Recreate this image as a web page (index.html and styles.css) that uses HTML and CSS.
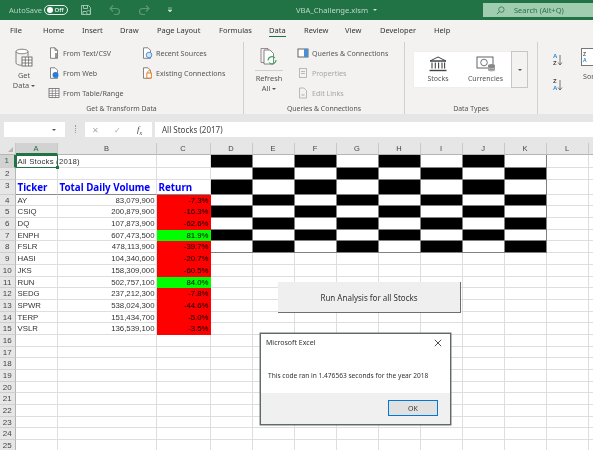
FILE: index.html
```html
<!DOCTYPE html>
<html lang="en">
<head>
<meta charset="utf-8">
<title>VBA_Challenge.xlsm - Excel</title>
<link rel="stylesheet" href="styles.css">
</head>
<body>
<div class="app">
<header class="titlebar">
  <span class="autosave">AutoSave</span>
  <span class="toggle"><i class="knob"></i><b>Off</b></span>
  <svg class="qa save" viewBox="0 0 12 12"><path d="M1.5 1.5h7l2 2v7h-9z M3.5 1.5v3h4v-3 M3 10.5v-3h3" fill="none" stroke="#a9cdb8" stroke-width=".9"/><circle cx="8.5" cy="8.5" r="2" fill="none" stroke="#a9cdb8" stroke-width=".8"/></svg>
  <svg class="qa undo" viewBox="0 0 12 12"><path d="M1.5 4.5h6a3 3 0 0 1 0 6H5 M4 1.5l-3 3 3 3" fill="none" stroke="#5c9a78" stroke-width="1.1"/></svg>
  <svg class="qa redo" viewBox="0 0 12 12"><path d="M10.5 4.5h-6a3 3 0 0 0 0 6H7 M8 1.5l3 3-3 3" fill="none" stroke="#5c9a78" stroke-width="1.1"/></svg>
  <svg class="qa more" viewBox="0 0 6 6"><path d="M1 1h4 M1 3h4l-2 2z" fill="#cfe3d7" stroke="#cfe3d7" stroke-width=".6"/></svg>
  <span class="filename">VBA_Challenge.xlsm</span><span class="caret-w"></span>
  <div class="search">
    <svg class="search-icon" viewBox="0 0 10 10"><circle cx="6" cy="4" r="3" fill="none" stroke="#2f7a50" stroke-width=".9"/><path d="M3.8 6.2L1 9" stroke="#2f7a50" stroke-width="1"/></svg>
    <span>Search (Alt+Q)</span>
  </div>
</header>
<nav class="tabs">
  <span class="tab t-file">File</span><span class="tab t-home">Home</span><span class="tab t-insert">Insert</span><span class="tab t-draw">Draw</span><span class="tab t-layout">Page Layout</span><span class="tab t-form">Formulas</span><span class="tab t-data"><span class="active">Data</span></span><span class="tab t-rev">Review</span><span class="tab t-view">View</span><span class="tab t-dev">Developer</span><span class="tab">Help</span>
</nav>
<section class="ribbon">
  <div class="group g-get">
    <div class="group-body">
      <div class="big get-data">
        <svg class="ic-big" viewBox="0 0 20 20"><ellipse cx="8" cy="3.5" rx="6" ry="2.3" fill="#fff" stroke="#666" stroke-width=".8"/><path d="M2 3.5v11.5c0 1.3 2.7 2.2 5.5 2.3M14 3.5v5" fill="none" stroke="#666" stroke-width=".8"/><rect x="8" y="9" width="10" height="9" fill="#fff" stroke="#555" stroke-width=".8"/><path d="M8 12h10M8 15h10M11.3 9v9M14.6 9v9" stroke="#555" stroke-width=".7"/></svg>
        <span>Get</span><span>Data <i class="caret"></i></span>
      </div>
      <div class="col c1">
        <div class="item"><svg class="ic" viewBox="0 0 12 12"><path d="M2.5.8h4.5l2.5 2.5v8H2.5z M7 .8v2.5h2.5" fill="#fff" stroke="#666" stroke-width=".8"/><path d="M8 6v5" stroke="#555" stroke-width="1.2"/></svg>From Text/CSV</div>
        <div class="item"><svg class="ic" viewBox="0 0 12 12"><path d="M2.5.8h4.5l2.5 2.5v8H2.5z" fill="#fff" stroke="#666" stroke-width=".8"/><circle cx="7.5" cy="8" r="3" fill="#2b7cd3"/></svg>From Web</div>
        <div class="item"><svg class="ic" viewBox="0 0 12 12"><rect x="1" y="1.5" width="10" height="9" fill="#fff" stroke="#666" stroke-width=".8"/><path d="M1 4h10M1 6.5h10M1 8.5h10M4.3 1.5v9M7.6 1.5v9" stroke="#666" stroke-width=".6"/></svg>From Table/Range</div>
      </div>
      <div class="col c2">
        <div class="item"><svg class="ic" viewBox="0 0 12 12"><path d="M2.5.8h4.5l2.5 2.5v8H2.5z" fill="#fff" stroke="#666" stroke-width=".8"/><circle cx="8" cy="8" r="2.8" fill="#d5e6f5" stroke="#2b7cd3" stroke-width=".8"/></svg>Recent Sources</div>
        <div class="item"><svg class="ic" viewBox="0 0 12 12"><path d="M2.5.8h4.5l2.5 2.5v8H2.5z" fill="#fff" stroke="#666" stroke-width=".8"/><rect x="5.8" y="6" width="4.6" height="5" fill="#fff" stroke="#e8822a"/><path d="M6.8 6V4.8a1.2 1.2 0 0 1 2.6 0V6" fill="none" stroke="#e8822a" stroke-width=".8"/></svg>Existing Connections</div>
      </div>
    </div>
    <div class="group-label">Get &amp; Transform Data</div>
  </div>
  <div class="group g-query">
    <div class="group-body">
      <div class="big refresh">
        <svg class="ic-big" viewBox="0 0 20 20"><path d="M2 1.5h7v14H2z" fill="#f3f2f1" stroke="#777" stroke-width=".8"/><path d="M5 3h6l3.5 3.5V17H5z" fill="#fff" stroke="#666" stroke-width=".8"/><path d="M9 13.5a4 4 0 0 1 7-2.5M17 13a4 4 0 0 1-7 2.5" fill="none" stroke="#3aa65f" stroke-width="1.1"/></svg>
        <div class="refresh-line"></div>
        <span>Refresh</span><span>All <i class="caret"></i></span>
      </div>
      <div class="col c3">
        <div class="item"><svg class="ic" viewBox="0 0 12 12"><rect x="1" y="2" width="10" height="8" fill="#fff" stroke="#555" stroke-width=".9"/><rect x="7" y="2" width="4" height="8" fill="#4a90d6"/></svg>Queries &amp; Connections</div>
        <div class="item off"><svg class="ic" viewBox="0 0 12 12"><rect x="2.5" y="1.5" width="7" height="9" fill="none" stroke="#aaa" stroke-width=".8"/><path d="M4 4.5h4M4 6.5h4" stroke="#aaa" stroke-width=".8"/></svg>Properties</div>
        <div class="item off"><svg class="ic" viewBox="0 0 12 12"><path d="M2.5 1h4.5l2.5 2.5v7.5h-7z" fill="none" stroke="#aaa" stroke-width=".8"/><path d="M4.5 8h3" stroke="#aaa"/></svg>Edit Links</div>
      </div>
    </div>
    <div class="group-label">Queries &amp; Connections</div>
  </div>
  <div class="group g-types">
    <div class="group-body">
      <div class="gallery">
        <div class="gal-item stocks">
          <svg class="ic-gal" viewBox="0 0 20 16"><path d="M2 5L10 1l8 4z M2 5h16" fill="none" stroke="#444" stroke-width="1"/><path d="M4 6.5v6M7.3 6.5v6M10.6 6.5v6M14 6.5v6M16.6 6.5v6" stroke="#444" stroke-width="1.1"/><path d="M1.5 14.5h17" stroke="#444" stroke-width="1.4"/></svg>
          <span>Stocks</span>
        </div>
        <div class="gal-item cur">
          <svg class="ic-gal" viewBox="0 0 20 16"><rect x="1" y="1" width="16" height="11" fill="#fff" stroke="#555" stroke-width=".9"/><circle cx="8" cy="6.5" r="3.3" fill="none" stroke="#555" stroke-width=".8"/><ellipse cx="15.5" cy="9.5" rx="3.5" ry="1.6" fill="#888"/><path d="M12 9.5v4.5c0 1.8 7 1.8 7 0V9.5" fill="#888"/><path d="M12 11.5c0 1.5 7 1.5 7 0M12 13.3c0 1.5 7 1.5 7 0" fill="none" stroke="#eee" stroke-width=".5"/></svg>
          <span>Currencies</span>
        </div>
        <div class="gal-drop"><i class="caret"></i></div>
      </div>
    </div>
    <div class="group-label">Data Types</div>
  </div>
  <div class="group g-sort">
    <div class="sort-col">
      <div class="az"><span class="stack"><b class="blue">A</b><b>Z</b></span><svg class="arr" viewBox="0 0 6 12"><path d="M3 1v10M1 8.5L3 11l2-2.5" fill="none" stroke="#555" stroke-width=".8"/></svg></div>
      <div class="az"><span class="stack"><b>Z</b><b class="blue">A</b></span><svg class="arr" viewBox="0 0 6 12"><path d="M3 1v10M1 8.5L3 11l2-2.5" fill="none" stroke="#555" stroke-width=".8"/></svg></div>
    </div>
    <div class="sort-big">
      <div class="sort-ic"><span><b>Z</b><b class="blue">A</b></span></div>
      <span class="sort-label">Sort</span>
    </div>
  </div>
</section>
<section class="formula">
  <div class="namebox"><i class="caret"></i></div>
  <div class="dots"></div>
  <div class="fbtns">
    <span class="x">&#10005;</span><span class="chk">&#10003;</span><span class="fx">f<sub>x</sub></span>
  </div>
  <div class="finput">All Stocks (2017)</div>
</section>
<main class="sheet">
  <div class="ch corner"><i class="tri"></i></div><div class="ch sel">A</div><div class="ch">B</div><div class="ch">C</div><div class="ch">D</div><div class="ch">E</div><div class="ch">F</div><div class="ch">G</div><div class="ch">H</div><div class="ch">I</div><div class="ch">J</div><div class="ch">K</div><div class="ch">L</div><div class="ch"></div>

  <div class="rh sel">1</div><div class="c a1">All Stocks (2018)</div><div class="c"></div><div class="c"></div><div class="k b"></div><div class="k"></div><div class="k b"></div><div class="k"></div><div class="k b"></div><div class="k"></div><div class="k b"></div><div class="k"></div><div class="c"></div><div class="c"></div>
  <div class="rh">2</div><div class="c"></div><div class="c"></div><div class="c"></div><div class="k"></div><div class="k b"></div><div class="k"></div><div class="k b"></div><div class="k"></div><div class="k b"></div><div class="k"></div><div class="k b"></div><div class="c"></div><div class="c"></div>
  <div class="rh">3</div><div class="c hd">Ticker</div><div class="c hd">Total Daily Volume</div><div class="c hd">Return</div><div class="k b"></div><div class="k"></div><div class="k b"></div><div class="k"></div><div class="k b"></div><div class="k"></div><div class="k b"></div><div class="k"></div><div class="c"></div><div class="c"></div>
  <div class="rh">4</div><div class="c">AY</div><div class="c n">83,079,900</div><div class="c n red">-7.3%</div><div class="k"></div><div class="k b"></div><div class="k"></div><div class="k b"></div><div class="k"></div><div class="k b"></div><div class="k"></div><div class="k b"></div><div class="c"></div><div class="c"></div>
  <div class="rh">5</div><div class="c">CSIQ</div><div class="c n">200,879,900</div><div class="c n red">-16.3%</div><div class="k b"></div><div class="k"></div><div class="k b"></div><div class="k"></div><div class="k b"></div><div class="k"></div><div class="k b"></div><div class="k"></div><div class="c"></div><div class="c"></div>
  <div class="rh">6</div><div class="c">DQ</div><div class="c n">107,873,900</div><div class="c n red">-62.6%</div><div class="k"></div><div class="k b"></div><div class="k"></div><div class="k b"></div><div class="k"></div><div class="k b"></div><div class="k"></div><div class="k b"></div><div class="c"></div><div class="c"></div>
  <div class="rh">7</div><div class="c">ENPH</div><div class="c n">607,473,500</div><div class="c n grn">81.9%</div><div class="k b"></div><div class="k"></div><div class="k b"></div><div class="k"></div><div class="k b"></div><div class="k"></div><div class="k b"></div><div class="k"></div><div class="c"></div><div class="c"></div>
  <div class="rh">8</div><div class="c">FSLR</div><div class="c n">478,113,900</div><div class="c n red">-39.7%</div><div class="k"></div><div class="k b"></div><div class="k"></div><div class="k b"></div><div class="k"></div><div class="k b"></div><div class="k"></div><div class="k b"></div><div class="c"></div><div class="c"></div>
  <div class="rh">9</div><div class="c">HASI</div><div class="c n">104,340,600</div><div class="c n red">-20.7%</div><div class="c"></div><div class="c"></div><div class="c"></div><div class="c"></div><div class="c"></div><div class="c"></div><div class="c"></div><div class="c"></div><div class="c"></div><div class="c"></div>
  <div class="rh">10</div><div class="c">JKS</div><div class="c n">158,309,000</div><div class="c n red">-60.5%</div><div class="c"></div><div class="c"></div><div class="c"></div><div class="c"></div><div class="c"></div><div class="c"></div><div class="c"></div><div class="c"></div><div class="c"></div><div class="c"></div>
  <div class="rh">11</div><div class="c">RUN</div><div class="c n">502,757,100</div><div class="c n grn">84.0%</div><div class="c"></div><div class="c"></div><div class="c"></div><div class="c"></div><div class="c"></div><div class="c"></div><div class="c"></div><div class="c"></div><div class="c"></div><div class="c"></div>
  <div class="rh">12</div><div class="c">SEDG</div><div class="c n">237,212,300</div><div class="c n red">-7.8%</div><div class="c"></div><div class="c"></div><div class="c"></div><div class="c"></div><div class="c"></div><div class="c"></div><div class="c"></div><div class="c"></div><div class="c"></div><div class="c"></div>
  <div class="rh">13</div><div class="c">SPWR</div><div class="c n">538,024,300</div><div class="c n red">-44.6%</div><div class="c"></div><div class="c"></div><div class="c"></div><div class="c"></div><div class="c"></div><div class="c"></div><div class="c"></div><div class="c"></div><div class="c"></div><div class="c"></div>
  <div class="rh">14</div><div class="c">TERP</div><div class="c n">151,434,700</div><div class="c n red">-5.0%</div><div class="c"></div><div class="c"></div><div class="c"></div><div class="c"></div><div class="c"></div><div class="c"></div><div class="c"></div><div class="c"></div><div class="c"></div><div class="c"></div>
  <div class="rh">15</div><div class="c">VSLR</div><div class="c n">136,539,100</div><div class="c n red">-3.5%</div><div class="c"></div><div class="c"></div><div class="c"></div><div class="c"></div><div class="c"></div><div class="c"></div><div class="c"></div><div class="c"></div><div class="c"></div><div class="c"></div>
  <div class="rh">16</div><div class="c"></div><div class="c"></div><div class="c"></div><div class="c"></div><div class="c"></div><div class="c"></div><div class="c"></div><div class="c"></div><div class="c"></div><div class="c"></div><div class="c"></div><div class="c"></div><div class="c"></div>
  <div class="rh">17</div><div class="c"></div><div class="c"></div><div class="c"></div><div class="c"></div><div class="c"></div><div class="c"></div><div class="c"></div><div class="c"></div><div class="c"></div><div class="c"></div><div class="c"></div><div class="c"></div><div class="c"></div>
  <div class="rh">18</div><div class="c"></div><div class="c"></div><div class="c"></div><div class="c"></div><div class="c"></div><div class="c"></div><div class="c"></div><div class="c"></div><div class="c"></div><div class="c"></div><div class="c"></div><div class="c"></div><div class="c"></div>
  <div class="rh">19</div><div class="c"></div><div class="c"></div><div class="c"></div><div class="c"></div><div class="c"></div><div class="c"></div><div class="c"></div><div class="c"></div><div class="c"></div><div class="c"></div><div class="c"></div><div class="c"></div><div class="c"></div>
  <div class="rh">20</div><div class="c"></div><div class="c"></div><div class="c"></div><div class="c"></div><div class="c"></div><div class="c"></div><div class="c"></div><div class="c"></div><div class="c"></div><div class="c"></div><div class="c"></div><div class="c"></div><div class="c"></div>
  <div class="rh">21</div><div class="c"></div><div class="c"></div><div class="c"></div><div class="c"></div><div class="c"></div><div class="c"></div><div class="c"></div><div class="c"></div><div class="c"></div><div class="c"></div><div class="c"></div><div class="c"></div><div class="c"></div>
  <div class="rh">22</div><div class="c"></div><div class="c"></div><div class="c"></div><div class="c"></div><div class="c"></div><div class="c"></div><div class="c"></div><div class="c"></div><div class="c"></div><div class="c"></div><div class="c"></div><div class="c"></div><div class="c"></div>
  <div class="rh">23</div><div class="c"></div><div class="c"></div><div class="c"></div><div class="c"></div><div class="c"></div><div class="c"></div><div class="c"></div><div class="c"></div><div class="c"></div><div class="c"></div><div class="c"></div><div class="c"></div><div class="c"></div>
  <div class="rh">24</div><div class="c"></div><div class="c"></div><div class="c"></div><div class="c"></div><div class="c"></div><div class="c"></div><div class="c"></div><div class="c"></div><div class="c"></div><div class="c"></div><div class="c"></div><div class="c"></div><div class="c"></div>
  <div class="rh">25</div><div class="c"></div><div class="c"></div><div class="c"></div><div class="c"></div><div class="c"></div><div class="c"></div><div class="c"></div><div class="c"></div><div class="c"></div><div class="c"></div><div class="c"></div><div class="c"></div><div class="c"></div>

  <div class="selection"><i class="handle"></i></div>
  <button class="macro">Run Analysis for all Stocks</button>
  <div class="dialog">
    <div class="dlg-head"><span>Microsoft Excel</span><svg class="dlg-x" viewBox="0 0 8 8"><path d="M.8.8l6.4 6.4M7.2.8L.8 7.2" stroke="#222" stroke-width=".8"/></svg></div>
    <div class="dlg-body">This code ran in 1.476563 seconds for the year 2018</div>
    <div class="dlg-foot"><button class="ok">OK</button></div>
  </div>
</main>
</div>
</body>
</html>
```
FILE: styles.css
```css
* { box-sizing: border-box; }
html, body { margin: 0; padding: 0; }
body { width: 593px; height: 450px; overflow: hidden; background: #fff; font-family: "Noto Sans", "Open Sans", sans-serif; color: #444; }
.app { width: 593px; height: 450px; display: flex; flex-direction: column; overflow: hidden; filter: blur(.3px); }

.titlebar { height: 20px; flex: none; background: #217346; display: flex; align-items: center; position: relative; color: #cfe3d7; font-size: 7.5px; }
.autosave { margin-left: 9px; width: 35px; color: #b5d3c2; }
.toggle { width: 24px; height: 10px; border: 1px solid #e8f1ec; border-radius: 5px; display: flex; align-items: center; padding-left: 1.5px; gap: 2px; color: #fff; font-size: 6px; }
.toggle b { font-weight: 500; }
.knob { width: 6px; height: 6px; border-radius: 50%; background: #fff; }
.qa { width: 12px; height: 12px; flex: none; }
.save { margin-left: 12px; }
.undo { margin-left: 17px; }
.redo { margin-left: 17px; }
.more { margin-left: 17px; width: 6px; height: 6px; }
.filename { margin-left: 123px; font-size: 7.6px; color: #bcd8c8; }
.caret-w { width: 0; height: 0; margin-left: 5px; border: 2px solid transparent; border-top: 2.5px solid #cfe3d7; border-bottom: 0; }
.search { position: absolute; left: 483px; top: 3px; width: 110px; height: 14px; background: #a0cdb0; display: flex; align-items: center; padding-left: 13px; gap: 9px; color: #2a7049; font-size: 7.5px; }
.search-icon { width: 9px; height: 9px; }

.tabs { height: 22px; flex: none; background: #f3f2f1; display: flex; align-items: center; padding: 0 0 2px 10px; font-size: 7.5px; color: #333; }
.tab { white-space: nowrap; flex: none; }
.t-file { width: 33px; }
.t-home { width: 39px; }
.t-insert { width: 38px; }
.t-draw { width: 37px; }
.t-layout { width: 62px; }
.t-form { width: 50px; }
.t-data { width: 35px; }
.t-rev { width: 41px; }
.t-view { width: 35px; }
.t-dev { width: 54px; }
.active { position: relative; display: inline-block; }
.active::after { content: ""; position: absolute; left: 0; right: 0; bottom: -2px; height: 1.5px; background: #217346; }

.ribbon { height: 72px; flex: none; background: #f3f2f1; display: flex; font-size: 7.1px; color: #555; }
.group { display: flex; flex-direction: column; border-right: 1px solid #d2d0ce; height: 72px; }
.g-get { width: 244px; }
.g-query { width: 161px; }
.g-types { width: 133px; }
.g-sort { width: 55px; border-right: 0; flex-direction: row; position: relative; overflow: hidden; }
.group-body { flex: 1; display: flex; min-height: 0; }
.group-label { height: 11px; line-height: 12px; text-align: center; font-size: 6.9px; color: #555; flex: none; }
.big { display: flex; flex-direction: column; align-items: center; line-height: 10px; font-size: 7.4px; }
.get-data { width: 48px; padding-top: 6px; }
.ic-big { width: 20px; height: 20px; margin-bottom: 2px; flex: none; }
.refresh { width: 40px; margin-left: 5px; padding-top: 5px; }
.refresh-line { width: 28px; height: 1px; background: #d2d0ce; margin: 1px 0 2px; flex: none; }
.col { display: flex; flex-direction: column; padding-top: 1px; }
.c1 { width: 93px; }
.c2 { width: 98px; }
.c3 { margin-left: 8px; }
.item { height: 20px; flex: none; display: flex; align-items: center; gap: 3px; white-space: nowrap; }
.ic { width: 12px; height: 12px; flex: none; }
.off { color: #a6a6a6; }
.caret { display: inline-block; width: 0; height: 0; border: 2px solid transparent; border-top: 2.5px solid #555; border-bottom: 0; vertical-align: middle; }
.gallery { margin: 9px 0 0 8px; width: 115px; height: 37px; background: #fff; display: flex; box-shadow: inset 0 0 0 1px #f0efee; font-size: 7px; }
.gal-item { display: flex; flex-direction: column; align-items: center; padding-top: 5px; gap: 2px; }
.stocks { width: 48px; padding-left: 2px; }
.cur { width: 49px; }
.ic-gal { width: 20px; height: 16px; flex: none; }
.gal-drop { margin-left: auto; width: 17px; border: 1px solid #c8c6c4; display: flex; align-items: center; justify-content: center; background: #f3f2f1; }
.sort-col { width: 43px; flex: none; padding: 9px 0 0 15px; display: flex; flex-direction: column; gap: 7px; }
.az { height: 18px; display: flex; align-items: center; color: #444; }
.stack { display: flex; flex-direction: column; line-height: 7px; font: 6px/7px "Liberation Sans", sans-serif; }
.blue { color: #2b88d8; }
.arr { width: 6px; height: 12px; flex: none; }
.sort-big { display: flex; flex-direction: column; padding-top: 6px; gap: 5px; white-space: nowrap; }
.sort-ic { width: 18px; height: 18px; border: 1px solid #777; background: #fff; display: flex; font: 5px/6px "Liberation Sans", sans-serif; flex: none; }
.sort-ic span { display: flex; flex-direction: column; margin: 2px 1px; }
.sort-label { padding-left: 2px; line-height: 10px; }

.formula { height: 29px; flex: none; background: #e6e6e6; display: flex; padding: 8px 0 6px 4px; font-size: 8px; }
.namebox { width: 61px; background: #fff; display: flex; align-items: center; justify-content: flex-end; padding-right: 9px; }
.dots { width: 20px; position: relative; }
.dots::before { content: ""; position: absolute; left: 10px; top: 3px; height: 8px; border-left: 1px dotted #999; }
.fbtns { width: 67px; background: #fff; display: flex; align-items: center; color: #aaa; padding-left: 7px; font-size: 8px; }
.x { width: 22px; }
.chk { width: 23px; }
.fx { font-family: "Liberation Serif", serif; font-style: italic; color: #444; font-size: 9px; }
.fx sub { font-size: 6px; }
.finput { flex: 1; margin-left: 3px; background: #fff; padding-left: 7px; line-height: 15px; color: #444; font-size: 8px; }

.sheet { flex: 1; min-height: 0; position: relative; display: grid; grid-template-columns: 15.5px 42px 99px 54px repeat(9, 42px) 42px; grid-template-rows: 12px 13px 11.7px 15px repeat(23, 11.7px); font-family: "Liberation Sans", sans-serif; font-size: 7.8px; color: #333; background: #fff; }
.ch { background: #e6e6e6; border-right: 1px solid #c8c8c8; border-bottom: 1px solid #b5b5b5; text-align: center; line-height: 11px; font-size: 7.5px; color: #444; position: relative; }
.corner { background: #e6e6e6; }
.tri { position: absolute; right: 2px; bottom: 2px; width: 0; height: 0; border-left: 5px solid transparent; border-bottom: 5px solid #b5b5b5; }
.rh { background: #e6e6e6; border-right: 1px solid #b5b5b5; border-bottom: 1px solid #cfcfcf; text-align: center; font-size: 8px; line-height: 11px; color: #444; }
.ch.sel, .rh.sel { background: #d2d2d2; color: #1f6e43; }
.ch.sel { border-bottom: 2px solid #217346; }
.rh.sel { border-right: 2px solid #217346; }
.c { border-right: 1px solid #dedede; border-bottom: 1px solid #dedede; padding: 0 1px 0 2px; line-height: 11px; white-space: nowrap; }
.n { text-align: right; }
.a1 { overflow: visible; line-height: 13px; z-index: 1; letter-spacing: .2px; }
.hd { color: #0000ff; font-weight: 700; font-family: "Noto Sans", sans-serif; font-size: 9.8px; line-height: 15px; border-bottom: 1px solid #888; }
.red { background: #ff0000; color: #000; border-color: #ff0000; }
.grn { background: #00ff00; color: #000; border-color: #00ff00; }
.k { border-right: 1px solid #808080; border-bottom: 1px solid #808080; background: #fff; }
.b { background: #000; }

.selection { position: absolute; left: 15.5px; top: 12px; width: 42px; height: 13px; border: 1px solid #217346; z-index: 2; }
.handle { position: absolute; right: -2px; bottom: -2px; width: 3px; height: 3px; background: #217346; }
.macro { position: absolute; left: 278px; top: 139px; width: 183px; height: 31px; background: #efefef; border: 0; border-right: 1px solid #6f6f6f; border-bottom: 1px solid #6f6f6f; font: 8px "Noto Sans", sans-serif; color: #333; padding: 0; }
.dialog { position: absolute; left: 260px; top: 190px; width: 191px; height: 92px; background: #fff; border: 1px solid #5f6a6a; box-shadow: 0 0 0 .5px #777; display: flex; flex-direction: column; font: 7px "Noto Sans", sans-serif; color: #333; z-index: 3; }
.dlg-head { height: 17px; display: flex; align-items: center; justify-content: space-between; padding: 0 8px 0 5px; font-size: 7px; }
.dlg-x { width: 8px; height: 8px; }
.dlg-body { flex: 1; padding: 20px 0 0 7px; font-size: 6.6px; white-space: nowrap; }
.dlg-foot { height: 31px; background: #f0f0f0; display: flex; justify-content: flex-end; align-items: flex-start; padding: 7px 12px 0 0; }
.ok { width: 50px; height: 16px; background: #e1e1e1; border: 1px solid #0078d7; font: 7px "Noto Sans", sans-serif; color: #333; padding: 0; }
```
